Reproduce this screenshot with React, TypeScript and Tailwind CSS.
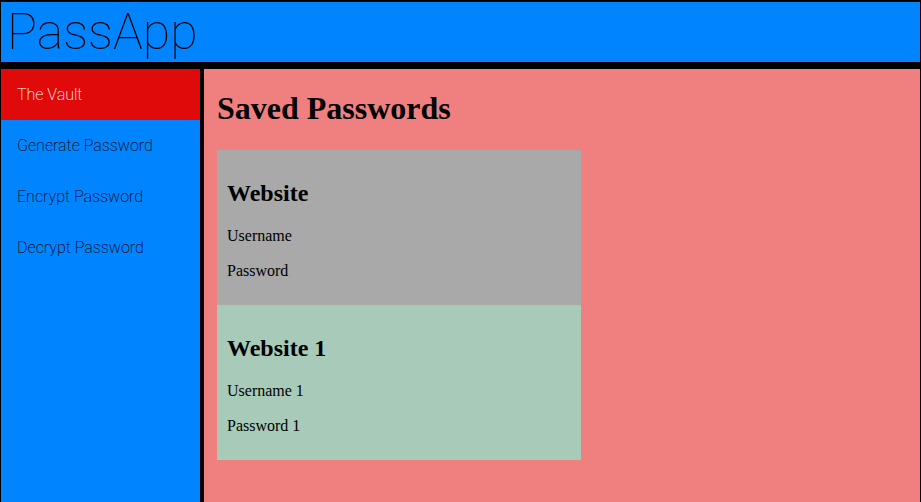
import React from "react";

const navItems = ["The Vault", "Generate Password", "Encrypt Password", "Decrypt Password"];

const entries = [
    { site: "Website", user: "Username", pass: "Password", bg: "bg-[#a9a9a9]" },
    { site: "Website 1", user: "Username 1", pass: "Password 1", bg: "bg-[#a8cbb9]" },
];

const App: React.FC = () => {
    return (
        <div className="flex flex-col h-[502px] w-[921px] bg-black pt-[2px] px-[1px] overflow-hidden">
            <header className="h-[60px] shrink-0 bg-[#0084ff] pl-[6px] flex items-center">
                <span className="font-['Roboto',sans-serif] font-thin text-[50px] leading-none text-black">
                    PassApp
                </span>
            </header>
            <div className="flex flex-1 mt-[7px] gap-[4px] min-h-0">
                <nav className="w-[199px] shrink-0 bg-[#0084ff] flex flex-col font-['Roboto',sans-serif] font-extralight text-[16px]">
                    {navItems.map((item, i) => (
                        <div
                            key={item}
                            className={
                                i === 0
                                    ? "h-[51px] px-4 flex items-center bg-[#e00a0a] text-white"
                                    : "h-[51px] px-4 flex items-center text-black"
                            }
                        >
                            {item}
                        </div>
                    ))}
                </nav>
                <main className="flex-1 bg-[#f08080] pl-[13px] font-['Liberation_Serif',serif] text-black">
                    <h1 className="text-[32px] font-bold mt-[21px] mb-[23px] leading-[1.15]">
                        Saved Passwords
                    </h1>
                    <div className="w-[364px] flex flex-col">
                        {entries.map((e) => (
                            <div key={e.site} className={`${e.bg} p-[10px] h-[155px]`}>
                                <h2 className="text-[24px] font-bold mt-[20px] leading-[1.15]">{e.site}</h2>
                                <p className="text-[16px] mt-[20px] leading-[1.15]">{e.user}</p>
                                <p className="text-[16px] mt-[16px] leading-[1.15]">{e.pass}</p>
                            </div>
                        ))}
                    </div>
                </main>
            </div>
        </div>
    );
};

export default App;
